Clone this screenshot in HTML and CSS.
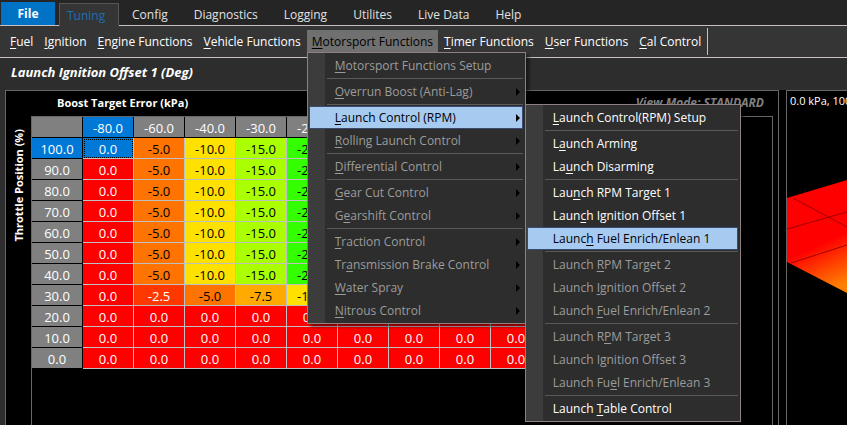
FILE: index.html
```html
<!DOCTYPE html>
<html lang="en">
<head>
    <meta charset="UTF-8">
    <meta name="viewport" content="width=device-width, initial-scale=1.0">
    <title>Launch Ignition Offset 1</title>
    <link rel="stylesheet" href="styles.css">
</head>
<body>
    <!-- Ribbon tabs -->
    <div class="tabs">
        <button class="tab file">File</button>
        <button class="tab active">Tuning</button>
        <button class="tab">Config</button>
        <button class="tab">Diagnostics</button>
        <button class="tab">Logging</button>
        <button class="tab">Utilites</button>
        <button class="tab">Live Data</button>
        <button class="tab">Help</button>
    </div>

    <!-- Menu bar -->
    <div class="menubar">
        <button class="menu-button"><u>F</u>uel</button>
        <button class="menu-button"><u>I</u>gnition</button>
        <button class="menu-button"><u>E</u>ngine Functions</button>
        <button class="menu-button"><u>V</u>ehicle Functions</button>
        <div class="menu-holder">
            <button class="menu-button open"><u>M</u>otorsport Functions</button>
            <ul class="menu">
                <li><button class="item" disabled><u>M</u>otorsport Functions Setup</button></li>
                <li class="line"></li>
                <li><button class="item parent" disabled><u>O</u>verrun Boost (Anti-Lag)</button></li>
                <li class="line"></li>
                <li class="sub-holder">
                    <button class="item parent selected"><u>L</u>aunch Control (RPM)</button>
                    <ul class="menu submenu">
                        <li><button class="item"><u>L</u>aunch Control(RPM) Setup</button></li>
                        <li class="line"></li>
                        <li><button class="item">L<u>a</u>unch Arming</button></li>
                        <li><button class="item">La<u>u</u>nch Disarming</button></li>
                        <li class="line"></li>
                        <li><button class="item">Lau<u>n</u>ch RPM Target 1</button></li>
                        <li><button class="item">Laun<u>c</u>h Ignition Offset 1</button></li>
                        <li><button class="item selected">Launc<u>h</u> Fuel Enrich/Enlean 1</button></li>
                        <li class="line"></li>
                        <li><button class="item" disabled>Launch <u>R</u>PM Target 2</button></li>
                        <li><button class="item" disabled>Launch <u>I</u>gnition Offset 2</button></li>
                        <li><button class="item" disabled>Launch <u>F</u>uel Enrich/Enlean 2</button></li>
                        <li class="line"></li>
                        <li><button class="item" disabled>Launch R<u>P</u>M Target 3</button></li>
                        <li><button class="item" disabled>Launch I<u>g</u>nition Offset 3</button></li>
                        <li><button class="item" disabled>Launch Fu<u>e</u>l Enrich/Enlean 3</button></li>
                        <li class="line"></li>
                        <li><button class="item">Launch <u>T</u>able Control</button></li>
                    </ul>
                </li>
                <li><button class="item parent" disabled><u>R</u>olling Launch Control</button></li>
                <li class="line"></li>
                <li><button class="item parent" disabled><u>D</u>ifferential Control</button></li>
                <li class="line"></li>
                <li><button class="item parent" disabled><u>G</u>ear Cut Control</button></li>
                <li><button class="item parent" disabled>G<u>e</u>arshift Control</button></li>
                <li class="line"></li>
                <li><button class="item parent" disabled><u>T</u>raction Control</button></li>
                <li><button class="item parent" disabled>Tr<u>a</u>nsmission Brake Control</button></li>
                <li><button class="item parent" disabled><u>W</u>ater Spray</button></li>
                <li><button class="item parent" disabled><u>N</u>itrous Control</button></li>
            </ul>
        </div>
        <button class="menu-button"><u>T</u>imer Functions</button>
        <button class="menu-button"><u>U</u>ser Functions</button>
        <button class="menu-button"><u>C</u>al Control</button>
        <span class="divider"></span>
    </div>

    <h1>Launch Ignition Offset 1 (Deg)</h1>

    <!-- Table view and surface view -->
    <div class="workspace">
        <div class="table-view">
            <div class="table-head">
                <span class="x-axis">Boost Target Error (kPa)</span>
                <span class="view-mode">View Mode: STANDARD</span>
            </div>
            <div class="y-axis">Throttle Position (%)</div>
            <div class="grid">
                <table id="offsets"></table>
            </div>
        </div>
        <div class="surface-view">
            <p>0.0 kPa, 100.0 %</p>
            <svg class="surface" width="60" height="130" viewBox="0 0 60 130">
                <defs>
                    <linearGradient id="heat" gradientUnits="userSpaceOnUse" x1="31" y1="80" x2="50" y2="122">
                        <stop offset="0" stop-color="#ff0000"/>
                        <stop offset="1" stop-color="#ff8000"/>
                    </linearGradient>
                </defs>
                <path d="M0 33 L60 15 V128 L0 97 Z" fill="url(#heat)"/>
                <path d="M6 33 L60 62 M0 64 L60 47 M4 98 L60 80" fill="none" stroke="#a00000"/>
            </svg>
        </div>
    </div>

    <script src="table.js"></script>
</body>
</html>
```
FILE: styles.css
```css
* {
    box-sizing: border-box;
}
body {
    margin: 0;
    height: 100vh;
    display: flex;
    flex-direction: column;
    overflow: hidden;
    background-color: #2d2d2d;
    color: white;
    font-family: "Open Sans", "Noto Sans", sans-serif;
    font-size: 12px;
}
button {
    font: inherit;
    color: inherit;
    background: none;
    border: none;
    padding: 0;
    white-space: nowrap;
}
u {
    text-underline-offset: 2px;
}
/* Ribbon tabs */
.tabs {
    display: flex;
    align-items: flex-end;
    height: 26px;
    padding-left: 1px;
    background-color: #252525;
    border-bottom: 1px solid #c8c0c0;
}
.tab {
    height: 22px;
    padding: 0 13px;
    color: #e0e0e0;
}
.file {
    height: 23px;
    width: 54px;
    margin-right: 4px;
    background-color: #0173c7;
    color: white;
    font-weight: bold;
}
.active {
    width: 60px;
    height: 23px;
    margin-bottom: -1px;
    padding: 0 7px;
    text-align: left;
    background-color: #353535;
    border: 1px solid #555;
    border-bottom: none;
    color: #1a6fb5;
}
/* Menu bar */
.menubar {
    display: flex;
    gap: 1px;
    height: 32px;
    padding: 4px 5px 5px;
    background-color: #353535;
    border-bottom: 1px solid #c8c0c0;
}
.menu-button {
    height: 22px;
    padding: 0 5px;
}
.menu-holder {
    position: relative;
}
.open {
    background-color: #707070;
    color: black;
}
.divider {
    width: 1px;
    height: 27px;
    margin: -2px 0 0;
    background-color: #c8c0c0;
}
/* Drop-down menus */
.menu {
    position: absolute;
    z-index: 10;
    top: 22px;
    left: 0;
    width: 219px;
    margin: 0;
    padding: 1px 2px 1px 1px;
    list-style: none;
    background: linear-gradient(to right, #3c3c3c 17px, #2d2d2d 17px);
    border: 1px solid #8f8080;
    box-shadow: 3px 3px 3px rgba(0, 0, 0, 0.5);
}
.sub-holder {
    position: relative;
}
.submenu {
    top: -2px;
    left: 216px;
    width: 216px;
}
.item {
    position: relative;
    display: block;
    width: 100%;
    height: 23px;
    padding: 0 25px;
    border: 1px solid transparent;
    text-align: left;
}
.item:disabled {
    color: #9c9c9c;
}
.item.selected {
    background-color: #a6caf0;
    border-color: #3a4a70;
    color: black;
}
.parent::after {
    content: "";
    position: absolute;
    top: 7px;
    right: 2px;
    border: 4px solid transparent;
    border-left-color: black;
    border-right: none;
}
.line {
    height: 1px;
    margin: 1px 0 1px 18px;
    background-color: #5a5a5a;
}
h1 {
    margin: 0;
    height: 32px;
    padding-left: 11px;
    font-size: 13px;
    font-style: italic;
    line-height: 28px;
}
/* Panels */
.workspace {
    flex: 1;
    display: flex;
    gap: 7px;
    margin-left: 5px;
    background-color: black;
}
.table-view {
    flex: 1;
    display: grid;
    grid-template-columns: 25px 1fr;
    grid-template-rows: 25px 1fr;
    padding-right: 5px;
    border: 1px solid #666;
    border-bottom: none;
}
.table-head {
    grid-column: 1 / 3;
    display: flex;
    justify-content: space-between;
    padding: 0 9px 0 51px;
    font-size: 11px;
    font-weight: bold;
    line-height: 24px;
}
.view-mode {
    color: #808080;
    font-size: 12px;
    font-style: italic;
}
.y-axis {
    justify-self: center;
    align-self: start;
    margin-top: 13px;
    writing-mode: vertical-rl;
    transform: rotate(180deg);
    font-size: 11px;
    font-weight: bold;
    white-space: nowrap;
}
.grid {
    border: 1px solid #666;
    border-bottom: none;
}
table {
    border-collapse: separate;
    border-spacing: 0;
    table-layout: fixed;
    width: 510px;
    font-size: 13px;
    line-height: 18px;
    text-align: center;
}
th, td {
    height: 21px;
    padding: 2px 0 0;
    border-right: 1px solid #c0c0c0;
    border-bottom: 1px solid #c0c0c0;
    font-weight: normal;
}
th {
    background-color: #808080;
    border-color: black;
}
th.current, td.current {
    background-color: #0078d7;
}
td.current {
    outline: 1px dotted black;
    outline-offset: -2px;
}
.v0 { background-color: #ff0000; }
.v2 { background-color: #ff3800; }
.v5 { background-color: #ff7300; color: black; }
.v7 { background-color: #ffaa00; color: black; }
.v10 { background-color: #ffe100; color: black; }
.v15 { background-color: #aaff00; color: black; }
.v20 { background-color: #33ff00; color: black; }
.surface-view {
    width: 61px;
    border: 1px solid #666;
    border-right: none;
    border-bottom: none;
    overflow: hidden;
}
.surface-view p {
    margin: 0;
    padding-left: 3px;
    height: 74px;
    font-size: 11px;
    line-height: 20px;
    white-space: nowrap;
}
.surface {
    display: block;
}
```
FILE: table.js
```js
const columns = [-80, -60, -40, -30, -20, -10, 0, 10, 20];
const full = [0, -5, -10, -15, -20, -20, -20, -20, -20];
const half = [0, -2.5, -5, -7.5, -10, -10, -10, -10, -10];
const none = [0, 0, 0, 0, 0, 0, 0, 0, 0];

const table = document.getElementById("offsets");

// Column headers
const head = table.insertRow();
head.innerHTML = "<th></th>" + columns
    .map((c, i) => `<th class="${i === 0 ? "current" : ""}">${c.toFixed(1)}</th>`)
    .join("");

// One row for each throttle position
for (let t = 100; t >= 0; t -= 10) {
    const values = t > 30 ? full : t === 30 ? half : none;
    const row = table.insertRow();
    row.innerHTML = `<th class="${t === 100 ? "current" : ""}">${t.toFixed(1)}</th>` + values
        .map((v, i) => {
            const current = t === 100 && i === 0 ? " current" : "";
            return `<td class="v${Math.floor(-v)}${current}">${v.toFixed(1)}</td>`;
        })
        .join("");
}
```
